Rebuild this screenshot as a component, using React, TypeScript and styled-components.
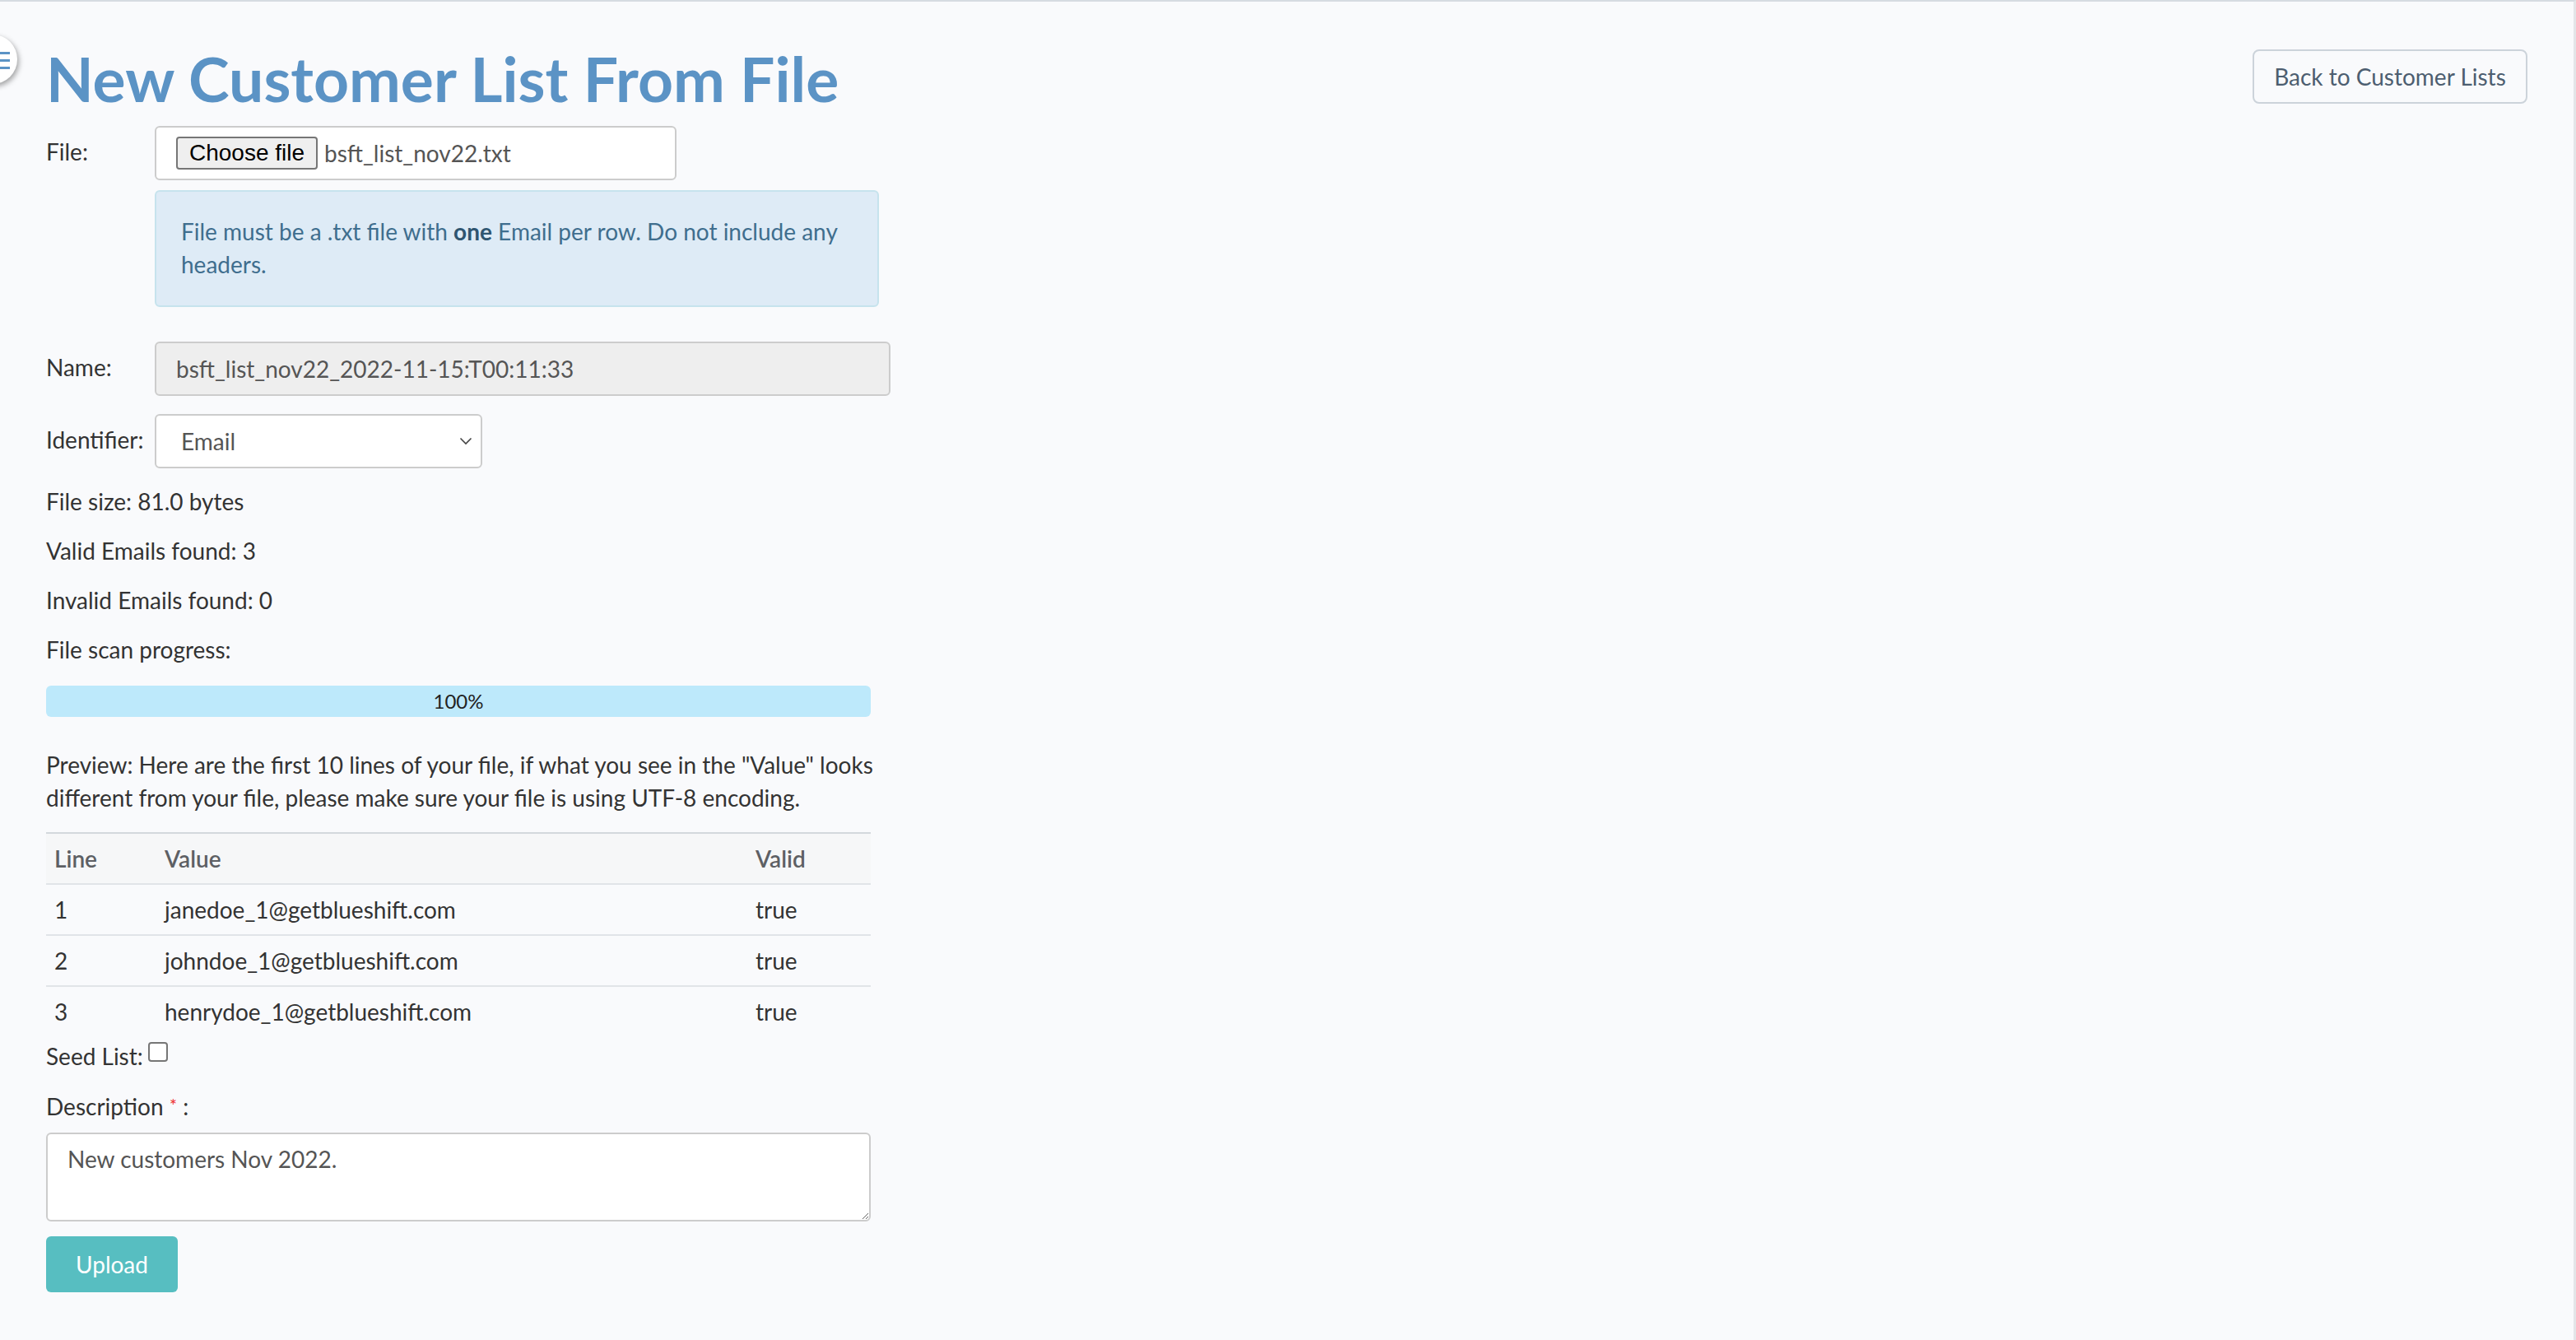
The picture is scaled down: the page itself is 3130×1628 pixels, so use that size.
import React from 'react';
import styled, { createGlobalStyle } from 'styled-components';

interface PreviewRow {
  line: number;
  value: string;
  valid: boolean;
}

const rows: PreviewRow[] = [
  { line: 1, value: 'janedoe_1@getblueshift.com', valid: true },
  { line: 2, value: 'johndoe_1@getblueshift.com', valid: true },
  { line: 3, value: 'henrydoe_1@getblueshift.com', valid: true },
];

const GlobalStyle = createGlobalStyle`
  html, body {
    margin: 0;
    padding: 0;
    background: #f9fafc;
  }
  body {
    font-family: Lato, "Open Sans", sans-serif;
    color: #333;
  }
`;

const App = () => {
  return (
    <>
      <GlobalStyle />
      <Page>
        <SidebarToggle>
          <ToggleLines>
            <span />
            <span />
            <span />
          </ToggleLines>
        </SidebarToggle>

        <Header>
          <Title>New Customer List From File</Title>
          <BackButton>Back to Customer Lists</BackButton>
        </Header>

        <Form>
          <FieldRow>
            <Label>File:</Label>
            <FieldBody>
              <FileBox>
                <ChooseButton>Choose file</ChooseButton>
                <FileName>bsft_list_nov22.txt</FileName>
              </FileBox>
              <InfoBox>
                File must be a .txt file with <strong>one</strong> Email per row. Do not include any
                <br />
                headers.
              </InfoBox>
            </FieldBody>
          </FieldRow>

          <FieldRow $top={42}>
            <Label>Name:</Label>
            <NameInput>bsft_list_nov22_2022-11-15:T00:11:33</NameInput>
          </FieldRow>

          <FieldRow $top={22}>
            <Label>Identifier:</Label>
            <SelectBox>
              <span>Email</span>
              <svg width="16" height="10" viewBox="0 0 16 10" fill="none">
                <path d="M1.5 1.5L8 8L14.5 1.5" stroke="#444" strokeWidth="1.6" />
              </svg>
            </SelectBox>
          </FieldRow>

          <Stat>File size: 81.0 bytes</Stat>
          <Stat>Valid Emails found: 3</Stat>
          <Stat>Invalid Emails found: 0</Stat>
          <Stat>File scan progress:</Stat>

          <Progress>
            <ProgressFill style={{ width: '100%' }}>100%</ProgressFill>
          </Progress>

          <Preview>
            Preview: Here are the first 10 lines of your file, if what you see in the "Value" looks
            <br />
            different from your file, please make sure your file is using UTF-8 encoding.
          </Preview>

          <Table>
            <colgroup>
              <col style={{ width: 134 }} />
              <col />
              <col style={{ width: 150 }} />
            </colgroup>
            <thead>
              <tr>
                <Th>Line</Th>
                <Th>Value</Th>
                <Th>Valid</Th>
              </tr>
            </thead>
            <tbody>
              {rows.map((r) => (
                <tr key={r.line}>
                  <Td>{r.line}</Td>
                  <Td>{r.value}</Td>
                  <Td>{String(r.valid)}</Td>
                </tr>
              ))}
            </tbody>
          </Table>

          <SeedRow>
            Seed List:
            <Checkbox />
          </SeedRow>

          <Stat>
            Description <Required>*</Required> :
          </Stat>

          <Description readOnly value="New customers Nov 2022." />

          <UploadButton>Upload</UploadButton>
        </Form>
      </Page>
    </>
  );
};

const Page = styled.div`
  position: relative;
  box-sizing: border-box;
  min-height: 1628px;
  border-top: 2px solid #d6dbe1;
  border-right: 3px solid #e3e5e8;
  background: #f9fafc;
  overflow: hidden;
  padding: 0 56px 0 56px;
`;

const SidebarToggle = styled.div`
  position: absolute;
  left: -39px;
  top: 40px;
  width: 60px;
  height: 60px;
  border-radius: 50%;
  background: #fff;
  box-shadow: 2px 3px 6px rgba(0, 0, 0, 0.35);
`;

const ToggleLines = styled.div`
  position: absolute;
  left: 27px;
  top: 21px;
  display: flex;
  flex-direction: column;
  gap: 6px;
  span {
    display: block;
    width: 24px;
    height: 3px;
    background: #5b93c5;
  }
`;

const Header = styled.div`
  display: flex;
  justify-content: space-between;
  align-items: flex-start;
  padding-top: 57px;
`;

const Title = styled.h1`
  margin: 0;
  font-family: Lato, sans-serif;
  font-size: 75px;
  line-height: 72px;
  font-weight: 700;
  color: #5b93c5;
`;

const BackButton = styled.button`
  margin-top: 1px;
  width: 334px;
  height: 66px;
  border: 2px solid #ccd3da;
  border-radius: 8px;
  background: transparent;
  font-family: Lato, sans-serif;
  font-size: 28px;
  color: #4d5e70;
`;

const Form = styled.div`
  display: flex;
  flex-direction: column;
  align-items: flex-start;
  padding-top: 22px;
  font-size: 28px;
  line-height: 40px;
  color: #333;
`;

const FieldRow = styled.div<{ $top?: number }>`
  display: flex;
  align-items: flex-start;
  margin-top: ${(p) => p.$top ?? 0}px;
`;

const Label = styled.div`
  width: 132px;
  line-height: 62px;
  font-size: 28px;
  color: #333;
`;

const FieldBody = styled.div`
  display: flex;
  flex-direction: column;
  gap: 12px;
`;

const FileBox = styled.div`
  box-sizing: border-box;
  width: 634px;
  height: 66px;
  display: flex;
  align-items: center;
  padding-left: 24px;
  border: 2px solid #cccccc;
  border-radius: 6px;
  background: #fff;
`;

const ChooseButton = styled.span`
  box-sizing: border-box;
  width: 172px;
  height: 40px;
  display: flex;
  align-items: center;
  justify-content: center;
  border: 2px solid #767676;
  border-radius: 4px;
  background: #efefef;
  font-family: "Liberation Sans", Arial, sans-serif;
  font-size: 28px;
  color: #000;
`;

const FileName = styled.span`
  margin-left: 8px;
  font-size: 28px;
  color: #555;
`;

const InfoBox = styled.div`
  box-sizing: border-box;
  width: 880px;
  padding: 28px 30px 30px;
  border: 2px solid #c6e3ed;
  border-radius: 6px;
  background: #deebf6;
  color: #3f6e8e;
  font-size: 28px;
  line-height: 40px;
  strong {
    font-weight: 700;
    color: #2f5570;
  }
`;

const NameInput = styled.div`
  box-sizing: border-box;
  width: 894px;
  height: 66px;
  display: flex;
  align-items: center;
  padding-left: 24px;
  border: 2px solid #cccccc;
  border-radius: 6px;
  background: #eeeeee;
  color: #555;
  font-size: 28px;
`;

const SelectBox = styled.div`
  box-sizing: border-box;
  width: 398px;
  height: 66px;
  display: flex;
  align-items: center;
  justify-content: space-between;
  padding: 0 10px 0 30px;
  border: 2px solid #cccccc;
  border-radius: 6px;
  background: #fff;
  color: #555;
  font-size: 28px;
`;

const Stat = styled.div`
  margin-top: 20px;
  font-size: 28px;
  line-height: 40px;
  color: #333;
`;

const Required = styled.span`
  color: #e33;
  font-size: 22px;
  vertical-align: 4px;
`;

const Progress = styled.div`
  margin-top: 24px;
  width: 1002px;
  height: 38px;
  border-radius: 6px;
  background: #f9fafc;
  overflow: hidden;
`;

const ProgressFill = styled.div`
  height: 100%;
  display: flex;
  align-items: center;
  justify-content: center;
  background: #bde9fb;
  font-size: 24px;
  color: #222;
`;

const Preview = styled.p`
  margin: 38px 0 0;
  font-size: 28px;
  line-height: 40px;
  color: #333;
`;

const Table = styled.table`
  margin-top: 22px;
  width: 1002px;
  border-collapse: collapse;
  table-layout: fixed;
  border-top: 2px solid #d3d8dd;
  font-size: 28px;
`;

const Th = styled.th`
  height: 60px;
  padding: 0 10px;
  text-align: left;
  background: #f6f7f8;
  font-weight: 600;
  color: #5d6064;
`;

const Td = styled.td`
  height: 60px;
  padding: 0 10px;
  border-top: 2px solid #e1e4e8;
  color: #333;
`;

const SeedRow = styled.div`
  margin-top: 4px;
  display: flex;
  align-items: center;
  font-size: 28px;
  line-height: 40px;
  color: #333;
`;

const Checkbox = styled.span`
  box-sizing: border-box;
  width: 24px;
  height: 24px;
  margin: -10px 0 0 6px;
  border: 2px solid #767676;
  border-radius: 4px;
  background: #fff;
`;

const Description = styled.textarea`
  box-sizing: border-box;
  margin-top: 12px;
  width: 1002px;
  height: 108px;
  padding: 10px 24px;
  border: 2px solid #cccccc;
  border-radius: 6px;
  background: #fff;
  font-family: Lato, sans-serif;
  font-size: 28px;
  line-height: 40px;
  color: #555;
  outline: none;
`;

const UploadButton = styled.button`
  margin-top: 18px;
  width: 160px;
  height: 68px;
  border: none;
  border-radius: 6px;
  background: #57bec1;
  color: #fff;
  font-family: Lato, sans-serif;
  font-size: 28px;
`;

export default App;
